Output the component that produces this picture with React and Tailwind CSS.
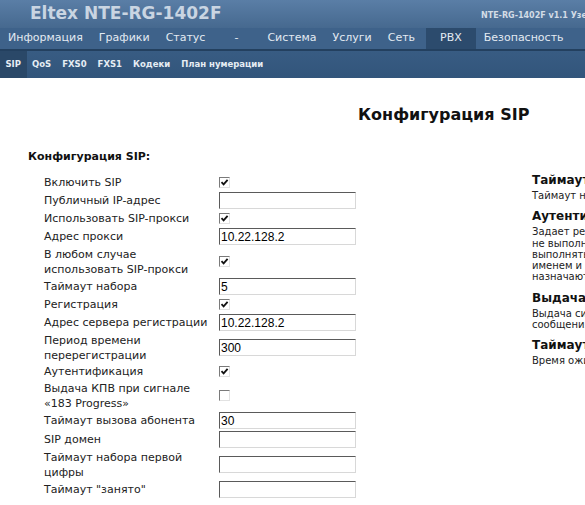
import React from 'react'

const font = { fontFamily: '"DejaVu Sans", Verdana, sans-serif' }

const nav = [
  { label: 'Информация' },
  { label: 'Графики' },
  { label: 'Статус' },
  { label: '-', wide: true },
  { label: 'Система' },
  { label: 'Услуги' },
  { label: 'Сеть' },
  { label: 'PBX', active: true },
  { label: 'Безопасность' },
]

const subnav = ['SIP', 'QoS', 'FXS0', 'FXS1', 'Кодеки', 'План нумерации']

// kind: cb = checkbox, in = text input
const rows = [
  { label: 'Включить SIP', kind: 'cb', checked: true },
  { label: 'Публичный IP-адрес', kind: 'in', value: '' },
  { label: 'Использовать SIP-прокси', kind: 'cb', checked: true },
  { label: 'Адрес прокси', kind: 'in', value: '10.22.128.2' },
  { label: ['В любом случае', 'использовать SIP-прокси'], kind: 'cb', checked: true },
  { label: 'Таймаут набора', kind: 'in', value: '5' },
  { label: 'Регистрация', kind: 'cb', checked: true },
  { label: 'Адрес сервера регистрации', kind: 'in', value: '10.22.128.2' },
  { label: ['Период времени', 'перерегистрации'], kind: 'in', value: '300' },
  { label: 'Аутентификация', kind: 'cb', checked: true },
  { label: ['Выдача КПВ при сигнале', '«183 Progress»'], kind: 'cb', checked: false },
  { label: 'Таймаут вызова абонента', kind: 'in', value: '30' },
  { label: 'SIP домен', kind: 'in', value: '' },
  { label: ['Таймаут набора первой', 'цифры'], kind: 'in', value: '' },
  { label: 'Таймаут "занято"', kind: 'in', value: '' },
]

const help = [
  { title: 'Таймаут набора', lines: ['Таймаут набора номера.'] },
  {
    title: 'Аутентификация',
    lines: [
      'Задает режим аутентификации. Если',
      'не выполнена регистрация, то будет',
      'выполнять аутентификацию с данным',
      'именем и паролем, которые',
      'назначаются для абонента.',
    ],
  },
  { title: 'Выдача КПВ при сигнале', lines: ['Выдача сигнала КПВ при получении', 'сообщения 183 Progress.'] },
  { title: 'Таймаут вызова абонента', lines: ['Время ожидания ответа абонента.'] },
]

function Checkbox({ checked }) {
  return (
    <span className="flex h-[11px] w-[11px] items-center justify-center border border-t-[#7a7a7a] border-l-[#7a7a7a] border-r-[#e2e2e2] border-b-[#e2e2e2] bg-white">
      {checked && (
        <svg width="9" height="9" viewBox="0 0 9 9">
          <path d="M1.5 4.2 L3.6 6.4 L7.6 1.8" fill="none" stroke="#111" strokeWidth="1.8" />
        </svg>
      )}
    </span>
  )
}

function Field({ value }) {
  return (
    <div className="flex h-[17px] w-[137px] items-center border border-t-[#5a5a5a] border-l-[#5a5a5a] border-r-[#d8d8d8] border-b-[#d8d8d8] bg-white pl-[1px] text-[12px] text-black" style={{ fontFamily: '"Liberation Sans", Arial, sans-serif' }}>
      {value}
    </div>
  )
}

export default function App() {
  return (
    <div className="h-[505px] w-[585px] overflow-hidden bg-white" style={font}>
      {/* Top bar */}
      <div className="flex h-[28px] w-[585px] items-center justify-between bg-gradient-to-b from-[#5a7ea6] to-[#46698f] pl-[30px]">
        <span className="text-[17px] font-bold text-[#c9d5e2]">Eltex NTE-RG-1402F</span>
        <span className="mt-[4px] w-[104px] overflow-hidden whitespace-nowrap text-[8px] font-bold text-[#d3dce6]">NTE-RG-1402F v1.1 Узел</span>
      </div>

      {/* Main nav */}
      <div className="flex h-[23px] w-[585px] items-stretch border-b-2 border-[#23405f] bg-[#3e628a] text-[11px] text-[#e3eaf2]">
        {nav.map(n => (
          <div
            key={n.label}
            className={
              'flex items-center whitespace-nowrap ' +
              (n.active ? 'ml-[3px] bg-[#2c4b6d] px-[14px]' : n.wide ? 'px-[21px]' : 'px-[8px]')
            }
          >
            {n.label}
          </div>
        ))}
      </div>

      {/* Sub nav */}
      <div className="flex h-[27px] w-[585px] items-stretch bg-gradient-to-b from-[#385c83] to-[#32557b] text-[8.5px] font-bold text-[#e6edf4]">
        {subnav.map((s, i) => (
          <div key={s} className={'flex items-center whitespace-nowrap px-[5.5px] ' + (i === 0 ? 'bg-[#2a4868]' : '')}>
            {s}
          </div>
        ))}
      </div>

      {/* Content */}
      <div className="relative w-[900px] text-[#222]">
        <div className="pl-[358px] pt-[27px] text-[16px] font-bold leading-[20px] text-[#111]">Конфигурация SIP</div>

        <div className="flex">
          <div className="w-[532px] shrink-0">
            <div className="pl-[28px] pt-[25px] text-[11px] font-bold leading-[14px] text-[#111]">Конфигурация SIP:</div>
            <div className="pl-[44px] pt-[10px]">
              {rows.map((r, i) => {
                const two = Array.isArray(r.label)
                const h = two ? 'h-[31px]' : r.kind === 'in' ? 'h-[19px]' : 'h-[17px]'
                return (
                  <div key={i} className={'flex items-center ' + h}>
                    <div className="w-[175px] text-[11px] leading-[15px]">
                      {two ? r.label.map(l => <div key={l}>{l}</div>) : r.label}
                    </div>
                    {r.kind === 'cb' ? <Checkbox checked={r.checked} /> : <Field value={r.value} />}
                  </div>
                )
              })}
            </div>
          </div>

          {/* Help column */}
          <div className="pt-[47px] text-[#222]">
            {help.map(h => (
              <div key={h.title} className="mb-[7px]">
                <div className="whitespace-nowrap text-[12px] font-bold leading-[16px] text-[#111]">{h.title}</div>
                <div className="mt-[2px] text-[10px] leading-[11.3px]">
                  {h.lines.map(l => (
                    <div key={l} className="whitespace-nowrap">{l}</div>
                  ))}
                </div>
              </div>
            ))}
          </div>
        </div>
      </div>
    </div>
  )
}
